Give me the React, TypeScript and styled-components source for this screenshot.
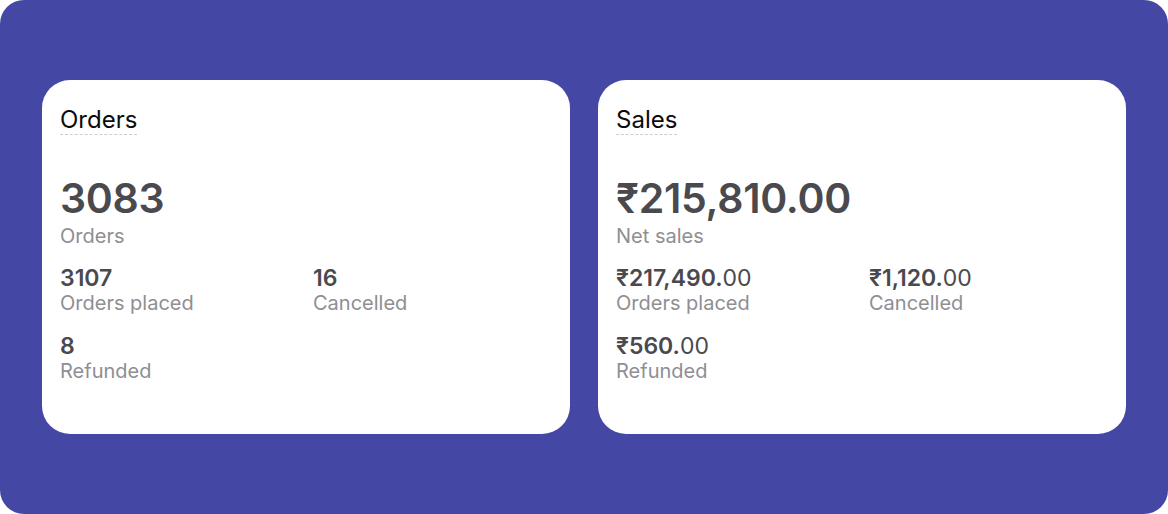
import styled, { createGlobalStyle } from "styled-components";

const GlobalStyle = createGlobalStyle`
  html, body {
    margin: 0;
    padding: 0;
    background: #ffffff;
  }
  body {
    font-family: Inter, "Noto Sans", "DejaVu Sans", sans-serif;
  }
`;

interface stat {
  value: string;
  cents?: string;
  label: string;
}

interface card {
  title: string;
  total: stat;
  items: stat[];
}

const cards: card[] = [
  {
    title: "Orders",
    total: { value: "3083", label: "Orders" },
    items: [
      { value: "3107", label: "Orders placed" },
      { value: "16", label: "Cancelled" },
      { value: "8", label: "Refunded" },
    ],
  },
  {
    title: "Sales",
    total: { value: "₹215,810.00", label: "Net sales" },
    items: [
      { value: "₹217,490.", cents: "00", label: "Orders placed" },
      { value: "₹1,120.", cents: "00", label: "Cancelled" },
      { value: "₹560.", cents: "00", label: "Refunded" },
    ],
  },
];

export default function App() {
  return (
    <>
      <GlobalStyle />
      <Board>
        {cards.map((c) => (
          <Card key={c.title}>
            <TitleRow>
              <Title>{c.title}</Title>
            </TitleRow>

            <Total>
              <TotalValue>{c.total.value}</TotalValue>
              <Label>{c.total.label}</Label>
            </Total>

            <StatGrid>
              {c.items.map((s) => (
                <Stat key={s.label}>
                  <StatValue>
                    {s.value}
                    {s.cents && <Cents>{s.cents}</Cents>}
                  </StatValue>
                  <Label>{s.label}</Label>
                </Stat>
              ))}
            </StatGrid>
          </Card>
        ))}
      </Board>
    </>
  );
}

const Board = styled.div`
  width: 1168px;
  height: 514px;
  box-sizing: border-box;
  padding: 80px 42px;
  background-color: #4547a5;
  border-radius: 24px;
  display: flex;
  gap: 28px;
`;

const Card = styled.div`
  flex: 1;
  background-color: #ffffff;
  border-radius: 28px;
  padding: 25px 18px;
  display: flex;
  flex-direction: column;
`;

const TitleRow = styled.div`
  line-height: 29px;
`;

const Title = styled.span`
  display: inline-block;
  font-size: 24px;
  font-weight: 400;
  color: #0b0b0b;
  line-height: 29px;
  border-bottom: 1px dashed #cdcdd0;
`;

const Total = styled.div`
  display: flex;
  flex-direction: column;
  margin-top: 36px;
`;

const TotalValue = styled.div`
  font-size: 41px;
  font-weight: 600;
  line-height: 51px;
  color: #4a494e;
  letter-spacing: -0.3px;
`;

const Label = styled.div`
  font-size: 20px;
  line-height: 24px;
  color: #8f8e93;
`;

const StatGrid = styled.div`
  display: grid;
  grid-template-columns: 1fr 1fr;
  column-gap: 14px;
  row-gap: 18px;
  margin-top: 17px;
`;

const Stat = styled.div`
  display: flex;
  flex-direction: column;
`;

const StatValue = styled.div`
  font-size: 23px;
  font-weight: 600;
  line-height: 26px;
  color: #4a494e;
`;

const Cents = styled.span`
  font-weight: 400;
`;
